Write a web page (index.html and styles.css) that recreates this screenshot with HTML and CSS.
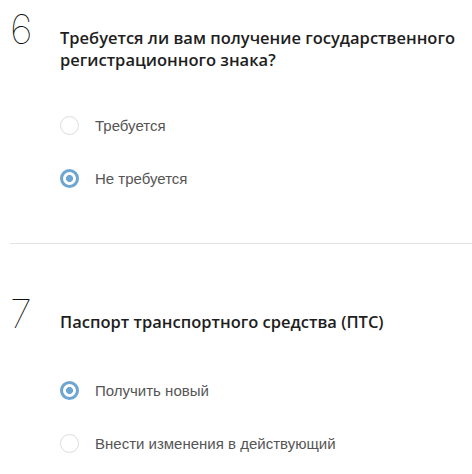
FILE: index.html
```html
<!DOCTYPE html>
<html lang="ru">
<head>
<meta charset="utf-8">
<title>Вопросы</title>
<link rel="stylesheet" href="styles.css">
</head>
<body>
<section class="q">
  <div class="num">6</div>
  <h2 class="title">Требуется ли вам получение государственного регистрационного знака?</h2>
  <div class="options">
    <label class="opt"><span class="radio"></span><span class="label">Требуется</span></label>
    <label class="opt"><span class="radio checked"></span><span class="label">Не требуется</span></label>
  </div>
</section>
<hr class="divider">
<section class="q">
  <div class="num">7</div>
  <h2 class="title">Паспорт транспортного средства (ПТС)</h2>
  <div class="options">
    <label class="opt"><span class="radio checked"></span><span class="label">Получить новый</span></label>
    <label class="opt"><span class="radio"></span><span class="label">Внести изменения в действующий</span></label>
  </div>
</section>
</body>
</html>
```
FILE: styles.css
```css
html, body {
  margin: 0;
  padding: 0;
  background: #ffffff;
}
body {
  width: 472px;
  font-family: "Open Sans", "Liberation Sans", sans-serif;
}
.q {
  display: grid;
  grid-template-columns: 60px 1fr;
  align-items: baseline;
  padding-top: 10px;
}
.num {
  grid-column: 1;
  grid-row: 1;
  padding-left: 10px;
  font-family: Inter, "Open Sans", sans-serif;
  font-weight: 100;
  font-style: normal;
  font-size: 40px;
  line-height: 40px;
  color: #111111;
}
.title {
  grid-column: 2;
  grid-row: 1;
  margin: 0;
  font-size: 16.5px;
  font-weight: 600;
  line-height: 22px;
  color: #1e1e1e;
  padding-right: 4px;
}
.options {
  grid-column: 2;
  grid-row: 2;
  display: flex;
  flex-direction: column;
  gap: 33px;
  margin-top: 44px;
}
.opt {
  display: flex;
  align-items: center;
  height: 20px;
}
.radio {
  box-sizing: border-box;
  width: 19px;
  height: 19px;
  border: 1px solid #dcdcdc;
  border-radius: 50%;
  background: #fff;
  margin-right: 16px;
  flex: none;
}
.radio.checked {
  border: 3px solid #6ea5d1;
  background: radial-gradient(circle, #6ea5d1 0 3.2px, #fff 3.8px);
}
.label {
  font-family: "Liberation Sans", Arial, sans-serif;
  font-size: 15px;
  color: #555555;
}
.divider {
  border: 0;
  border-top: 1px solid #e3e3e3;
  height: 0;
  margin: 55px 0 40px 10px;
}
.q + .divider + .q .options {
  margin-top: 46px;
}
```
